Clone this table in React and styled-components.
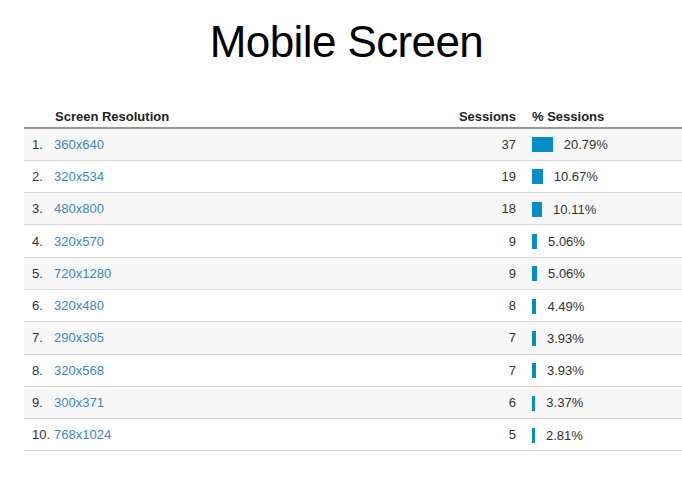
import React from 'react';
import styled, { createGlobalStyle } from 'styled-components';

const GlobalStyle = createGlobalStyle`
    body {
        margin: 0;
        background: #ffffff;
        font-family: "Liberation Sans", Arial, sans-serif;
    }
`;

const Page = styled.div`
    width: 682px;
    height: 478px;
    overflow: hidden;
`;

const Title = styled.h1`
    margin: 0;
    padding: 16px 0 0 11px;
    height: 101px;
    box-sizing: border-box;
    text-align: center;
    font-size: 44px;
    font-weight: normal;
    letter-spacing: -0.6px;
    line-height: 52px;
    color: #000;
`;

const Table = styled.table`
    margin-left: 24px;
    width: 658px;
    table-layout: fixed;
    border-collapse: collapse;
    font-size: 13px;
    color: #333;
`;

const HeadCell = styled.th`
    height: 27px;
    width: ${(p) => p.width || 'auto'};
    padding: 8px 0 0 ${(p) => p.indent || 0}px;
    box-sizing: border-box;
    border-bottom: 2px solid #959595;
    font-weight: bold;
    color: #222;
    text-align: ${(p) => p.align || 'left'};
    vertical-align: top;
    white-space: nowrap;
`;

const Row = styled.tr`
    background: ${(p) => (p.shaded ? '#f7f7f7' : '#ffffff')};
    border-bottom: 1px solid #d9d9d9;
    height: 32.3px;
`;

const IndexCell = styled.td`
    padding: 0 0 0 8px;
    white-space: nowrap;
`;

const LinkCell = styled.td`
    padding: 0;
`;

const Link = styled.a`
    color: #3b87c4;
    text-decoration: none;
`;

const NumCell = styled.td`
    padding: 0;
    text-align: right;
`;

const PctCell = styled.td`
    padding: 0 0 0 16px;
    white-space: nowrap;
`;

const Bar = styled.span`
    display: inline-block;
    vertical-align: middle;
    height: 15px;
    margin-right: 11px;
    background: #058dc7;
`;

const PctText = styled.span`
    vertical-align: middle;
`;

const rows = [
    ['360x640', 37, 20.79],
    ['320x534', 19, 10.67],
    ['480x800', 18, 10.11],
    ['320x570', 9, 5.06],
    ['720x1280', 9, 5.06],
    ['320x480', 8, 4.49],
    ['290x305', 7, 3.93],
    ['320x568', 7, 3.93],
    ['300x371', 6, 3.37],
    ['768x1024', 5, 2.81],
];

export default function App() {
    return (
        <Page>
            <GlobalStyle />
            <Title>Mobile Screen</Title>
            <Table>
                <thead>
                    <tr>
                        <HeadCell width="30px" />
                        <HeadCell indent={1}>Screen Resolution</HeadCell>
                        <HeadCell width="100px" align="right">Sessions</HeadCell>
                        <HeadCell width="166px" indent={16}>% Sessions</HeadCell>
                    </tr>
                </thead>
                <tbody>
                    {rows.map(([res, sessions, pct], i) => (
                        <Row key={res + i} shaded={i % 2 === 0}>
                            <IndexCell>{i + 1}.</IndexCell>
                            <LinkCell><Link href="#">{res}</Link></LinkCell>
                            <NumCell>{sessions}</NumCell>
                            <PctCell>
                                <Bar style={{ width: Math.max(3, pct) }} />
                                <PctText>{pct.toFixed(2)}%</PctText>
                            </PctCell>
                        </Row>
                    ))}
                </tbody>
            </Table>
        </Page>
    );
}
